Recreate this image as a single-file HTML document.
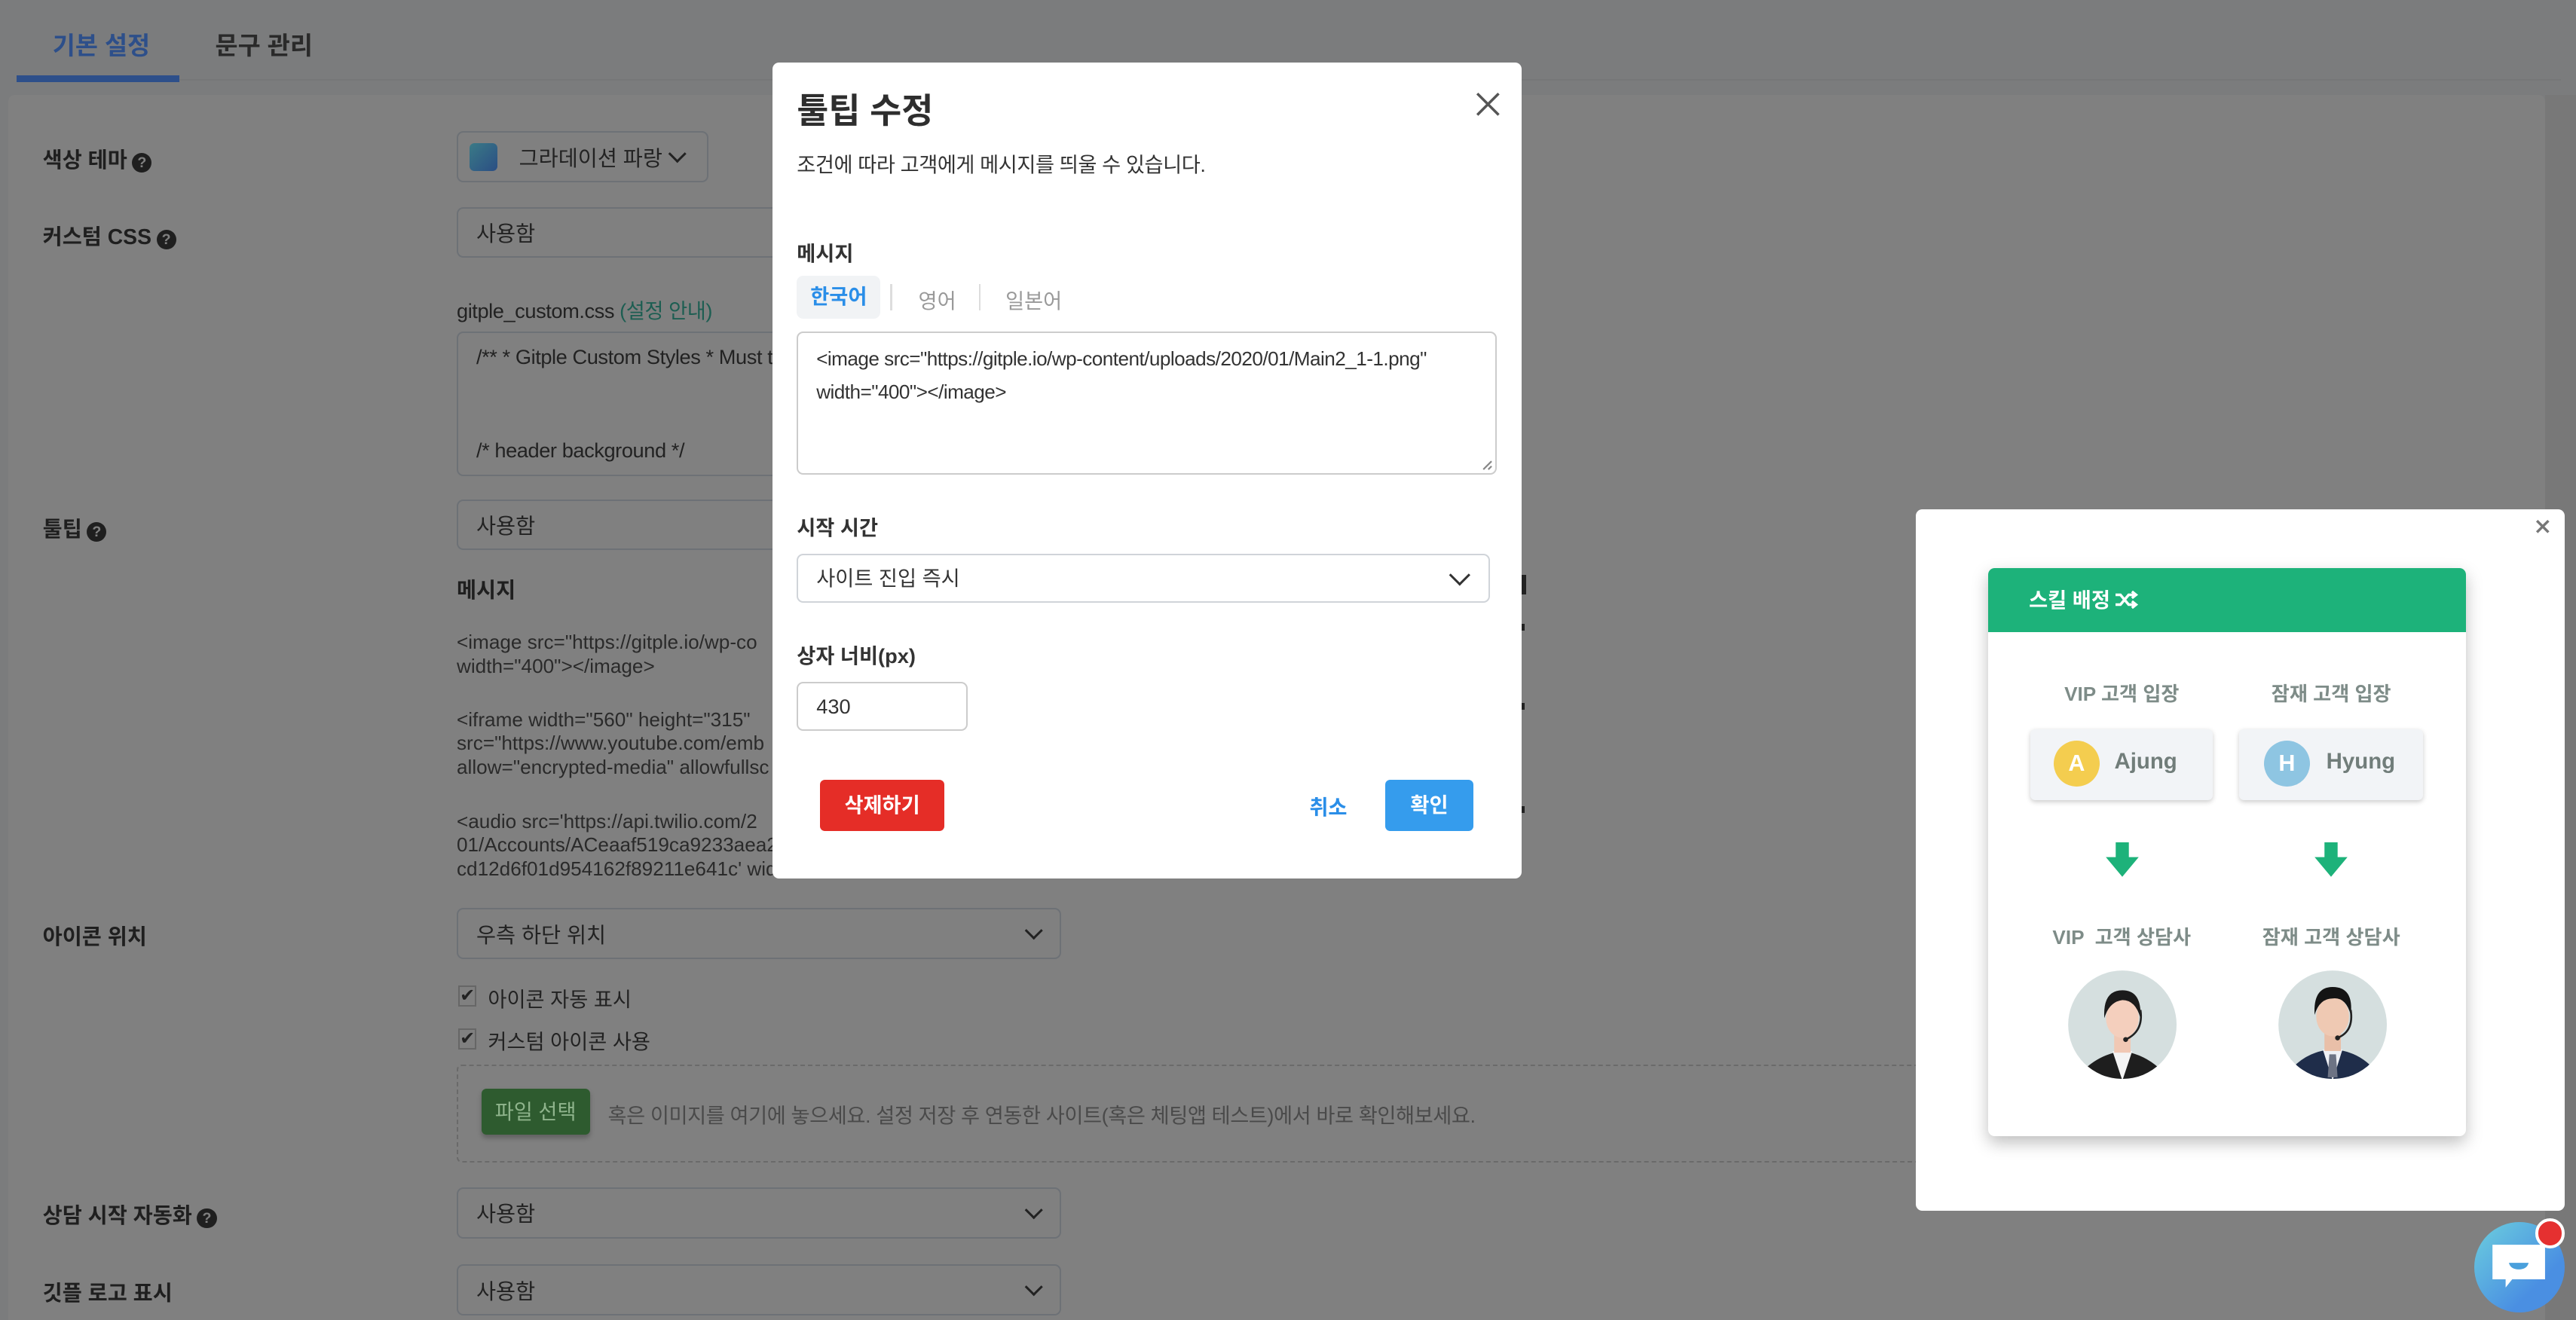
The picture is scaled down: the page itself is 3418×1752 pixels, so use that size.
<!DOCTYPE html>
<html><head><meta charset="utf-8">
<style>
*{box-sizing:border-box;margin:0;padding:0}
html,body{width:3418px;height:1752px;overflow:hidden;background:#7b7c7d}
#r{zoom:2.17985;width:1568px;height:804px;position:relative;overflow:hidden;background:#7b7c7d;font-family:"Liberation Sans","Noto Sans CJK KR",sans-serif;color:#222}
.a{position:absolute;white-space:nowrap}
.lbl{font-size:13px;font-weight:bold;color:#1f1f1f}
.q{display:inline-block;width:12px;height:12px;border-radius:50%;background:#1f1f1f;color:#808080;font-size:9px;line-height:12px;text-align:center;font-weight:bold;vertical-align:0px;margin-left:3px}
.box{position:absolute;border:1px solid #6d7176;border-radius:4px;font-size:13px;color:#222;padding-left:11px;display:flex;align-items:center}
.chev{position:absolute;right:12px;top:50%;width:8px;height:8px;border-right:1.6px solid #222;border-bottom:1.6px solid #222;transform:translateY(-70%) rotate(45deg)}
.msg{font-size:12px;color:#2a2a2a;line-height:14.5px}
.cb{position:absolute;width:11px;height:13px;border:1px solid #666;font-size:11px;line-height:11px;text-align:center;color:#222}
</style></head><body><div id="r">
<div class="a" style="left:32px;top:16px;font-size:15px;font-weight:bold;color:#2d4f8a">기본 설정</div>
<div class="a" style="left:131px;top:16px;font-size:15px;font-weight:bold;color:#2a2a2a">문구 관리</div>
<div class="a" style="left:10px;top:46px;width:99px;height:4px;background:#2d4f8a"></div>
<div class="a" style="left:109px;top:48px;width:1450px;height:1px;background:#767778"></div>
<div class="a" style="left:5px;top:58px;width:1544px;height:760px;background:#808080;border-radius:4px"></div>
<div class="a" style="left:1549px;top:58px;width:19px;height:760px;background:#787878"></div>

<div class="a lbl" style="left:26px;top:87px">색상 테마<span class="q">?</span></div>
<div class="box" style="left:278px;top:80px;width:153px;height:31px;padding-left:7px"><span style="width:17px;height:17px;border-radius:3px;background:linear-gradient(135deg,#3a7a86,#2b4e84);display:inline-block;margin-right:13px"></span>그라데이션 파랑<div class="chev" style="right:14px"></div></div>

<div class="a lbl" style="left:26px;top:134px">커스텀 CSS<span class="q">?</span></div>
<div class="box" style="left:278px;top:126px;width:368px;height:31px">사용함</div>
<div class="a" style="left:278px;top:179px;font-size:12.5px;color:#222;letter-spacing:-0.2px">gitple_custom.css <span style="color:#1d5e52">(설정 안내)</span></div>
<div class="box" style="left:278px;top:202px;width:368px;height:88px;align-items:flex-start;padding-top:5px;font-size:12.5px;line-height:19px;overflow:hidden;display:block;letter-spacing:-0.2px">/** * Gitple Custom Styles * Must t<br><br><br>/* header background */</div>

<div class="a lbl" style="left:26px;top:312px">툴팁<span class="q">?</span></div>
<div class="box" style="left:278px;top:304px;width:368px;height:31px">사용함</div>
<div class="a lbl" style="left:278px;top:349px">메시지</div>
<div class="a msg" style="left:278px;top:384px">&lt;image src="https://gitple.io/wp-co<br>width="400"&gt;&lt;/image&gt;</div>
<div class="a msg" style="left:278px;top:431px">&lt;iframe width="560" height="315"<br>src="https://www.youtube.com/emb<br>allow="encrypted-media" allowfullsc</div>
<div class="a msg" style="left:278px;top:493px">&lt;audio src='https://api.twilio.com/2<br>01/Accounts/ACeaaf519ca9233aea2<br>cd12d6f01d954162f89211e641c' wid</div>
<div class="a" style="left:926px;top:350px;width:3px;height:12px;background:#222"></div>
<div class="a" style="left:926px;top:380px;width:2px;height:4px;background:#222"></div>
<div class="a" style="left:926px;top:428px;width:2px;height:4px;background:#222"></div>
<div class="a" style="left:926px;top:491px;width:2px;height:4px;background:#222"></div>

<div class="a lbl" style="left:26px;top:560px">아이콘 위치</div>
<div class="box" style="left:278px;top:553px;width:368px;height:31px">우측 하단 위치<div class="chev"></div></div>
<div class="cb" style="left:279px;top:600px">✔</div>
<div class="a" style="left:297px;top:598px;font-size:12.5px">아이콘 자동 표시</div>
<div class="cb" style="left:279px;top:626px">✔</div>
<div class="a" style="left:297px;top:624px;font-size:12.5px">커스텀 아이콘 사용</div>
<div class="a" style="left:278px;top:648px;width:900px;height:60px;border:1px dashed #6a6a6a;border-radius:3px"></div>
<div class="a" style="left:293px;top:663px;width:66px;height:28px;background:#2e5b2f;border-radius:3px;color:#8fb48c;font-size:12.5px;text-align:center;line-height:28px;box-shadow:0 2px 3px rgba(0,0,0,.25)">파일 선택</div>
<div class="a" style="left:370px;top:669px;font-size:12.5px;color:#4a4a4a;letter-spacing:-0.2px">혹은 이미지를 여기에 놓으세요. 설정 저장 후 연동한 사이트(혹은 체팅앱 테스트)에서 바로 확인해보세요.</div>

<div class="a lbl" style="left:26px;top:730px">상담 시작 자동화<span class="q">?</span></div>
<div class="box" style="left:278px;top:723px;width:368px;height:31px">사용함<div class="chev"></div></div>
<div class="a lbl" style="left:26px;top:777px">깃플 로고 표시</div>
<div class="box" style="left:278px;top:770px;width:368px;height:31px">사용함<div class="chev"></div></div>

<div class="a" style="left:470px;top:38px;width:456px;height:497px;background:#fff;border-radius:4px"></div>
<div class="a" style="left:485px;top:51px;font-size:21px;font-weight:bold;color:#2e2e2e">툴팁 수정</div>
<svg class="a" style="left:898px;top:56px" width="15" height="15" viewBox="0 0 15 15"><path d="M1 1L14 14M14 1L1 14" stroke="#555" stroke-width="1.6"/></svg>
<div class="a" style="left:485px;top:90px;font-size:12.5px;color:#333;letter-spacing:-0.2px">조건에 따라 고객에게 메시지를 띄울 수 있습니다.</div>
<div class="a" style="left:485px;top:144px;font-size:12.5px;font-weight:bold;color:#333">메시지</div>
<div class="a" style="left:485px;top:168px;width:51px;height:26px;background:#f1f3f5;border-radius:4px;color:#2a8ee8;font-weight:bold;font-size:12.5px;text-align:center;line-height:26px">한국어</div>
<div class="a" style="left:542px;top:173px;width:1px;height:16px;background:#ddd"></div>
<div class="a" style="left:559px;top:173px;font-size:12.5px;color:#999">영어</div>
<div class="a" style="left:596px;top:173px;width:1px;height:16px;background:#ddd"></div>
<div class="a" style="left:612px;top:173px;font-size:12.5px;color:#999">일본어</div>
<div class="a" style="left:485px;top:202px;width:426px;height:87px;border:1px solid #ccc;border-radius:4px;padding:6px 11px;font-size:12px;letter-spacing:-0.25px;line-height:20px;color:#333">&lt;image src="https://gitple.io/wp-content/uploads/2020/01/Main2_1-1.png"<br>width="400"&gt;&lt;/image&gt;</div>
<svg class="a" style="left:902px;top:280px" width="7" height="7"><path d="M1 6L6 1M4 6L6 4" stroke="#888" stroke-width="1"/></svg>
<div class="a" style="left:485px;top:311px;font-size:12.5px;font-weight:bold;color:#333">시작 시간</div>
<div class="a" style="left:485px;top:337px;width:422px;height:30px;border:1px solid #d0d4d9;border-radius:4px;font-size:12.5px;color:#333;padding-left:11px;line-height:28px">사이트 진입 즉시<div class="chev" style="border-color:#333;right:13px;width:9px;height:9px"></div></div>
<div class="a" style="left:485px;top:389px;font-size:12.5px;font-weight:bold;color:#333">상자 너비(px)</div>
<div class="a" style="left:485px;top:415px;width:104px;height:30px;border:1px solid #ccc;border-radius:4px;font-size:12.5px;color:#333;padding-left:11px;line-height:28px">430</div>
<div class="a" style="left:499px;top:475px;width:76px;height:31px;background:#e52d27;border-radius:3px;color:#fff;font-weight:bold;font-size:12.5px;text-align:center;line-height:31px">삭제하기</div>
<div class="a" style="left:797px;top:481px;font-size:12.5px;font-weight:bold;color:#2a8ee8">취소</div>
<div class="a" style="left:843px;top:475px;width:54px;height:31px;background:#359ced;border-radius:3px;color:#fff;font-weight:bold;font-size:12.5px;text-align:center;line-height:31px">확인</div>

<div class="a" style="left:1166px;top:310px;width:395px;height:427px;background:#fff;border-radius:4px"></div>
<svg class="a" style="left:1543px;top:316px" width="9" height="9"><path d="M1 1L8 8M8 1L1 8" stroke="#777" stroke-width="1.6"/></svg>
<div class="a" style="left:1210px;top:346px;width:291px;height:346px;background:#fff;border-radius:4px;box-shadow:0 4px 10px rgba(0,0,0,.25);overflow:hidden">
 <div style="height:39px;background:#1db27a;color:#fff;font-weight:bold;font-size:12.5px;padding-left:25px;line-height:39px">스킬 배정 <svg width="14" height="11" viewBox="0 0 14 11" style="vertical-align:-1px"><path d="M0 2.5h3l5 6h4M0 8.5h3l5-6h4M10 0.5l2.5 2-2.5 2M10 6.5l2.5 2-2.5 2" stroke="#fff" stroke-width="1.6" fill="none"/></svg></div>
</div>
<div class="a" style="left:1236px;top:413px;width:111px;text-align:center;font-size:12px;font-weight:bold;color:#7e8c88">VIP 고객 입장</div>
<div class="a" style="left:1363px;top:413px;width:112px;text-align:center;font-size:12px;font-weight:bold;color:#7e8c88">잠재 고객 입장</div>
<div class="a" style="left:1236px;top:444px;width:111px;height:43px;background:#f2f4f7;border-radius:3px;box-shadow:0 1px 3px rgba(0,0,0,.2)"></div>
<div class="a" style="left:1363px;top:444px;width:112px;height:43px;background:#f2f4f7;border-radius:3px;box-shadow:0 1px 3px rgba(0,0,0,.2)"></div>
<div class="a" style="left:1250px;top:451px;width:28px;height:28px;border-radius:50%;background:#f4cd4f;color:#fff;font-weight:bold;font-size:14px;text-align:center;line-height:28px">A</div>
<div class="a" style="left:1287px;top:456px;font-size:13.5px;font-weight:bold;color:#717d7a">Ajung</div>
<div class="a" style="left:1378px;top:451px;width:28px;height:28px;border-radius:50%;background:#8ec5e2;color:#fff;font-weight:bold;font-size:14px;text-align:center;line-height:28px">H</div>
<div class="a" style="left:1416px;top:456px;font-size:13.5px;font-weight:bold;color:#717d7a">Hyung</div>
<svg class="a" style="left:1281px;top:513px" width="22" height="22"><path d="M7 0h8v9h6l-10 12L1 9h6z" fill="#1db27a"/></svg>
<svg class="a" style="left:1408px;top:513px" width="22" height="22"><path d="M7 0h8v9h6l-10 12L1 9h6z" fill="#1db27a"/></svg>
<div class="a" style="left:1236px;top:561px;width:111px;text-align:center;font-size:12px;font-weight:bold;color:#7e8c88">VIP &nbsp;고객 상담사</div>
<div class="a" style="left:1363px;top:561px;width:112px;text-align:center;font-size:12px;font-weight:bold;color:#7e8c88">잠재 고객 상담사</div>
<svg class="a" style="left:1258px;top:590px" width="68" height="68" viewBox="0 0 68 68"><defs><clipPath id="c1"><circle cx="34" cy="34" r="33"/></clipPath></defs><circle cx="34" cy="34" r="33" fill="#d5dfdf"/><g clip-path="url(#c1)"><path d="M10 62 Q20 52 34 50 Q48 52 58 62 L58 70 L10 70z" fill="#1e1e1e"/><path d="M28 50 L34 68 L40 50z" fill="#f4f4f4"/><rect x="29" y="38" width="10" height="13" fill="#f1c8b4"/><ellipse cx="34" cy="30" rx="10" ry="12" fill="#f4cfbd"/><path d="M23 30 Q22 13 34 13 Q46 13 45 30 Q42 19 34 19 Q26 20 23 30z" fill="#1b1b1b"/><path d="M45 25 Q47 38 36 43" stroke="#222" stroke-width="1.2" fill="none"/><circle cx="36" cy="43" r="1.5" fill="#222"/></g></svg>
<svg class="a" style="left:1386px;top:590px" width="68" height="68" viewBox="0 0 68 68"><defs><clipPath id="c2"><circle cx="34" cy="34" r="33"/></clipPath></defs><circle cx="34" cy="34" r="33" fill="#d5dfdf"/><g clip-path="url(#c2)"><path d="M8 62 Q18 50 34 49 Q50 50 60 62 L60 70 L8 70z" fill="#1f2d4a"/><path d="M28 49 L34 68 L40 49z" fill="#eef0f5"/><path d="M32 52 L36 52 L37 66 L31 66z" fill="#6d7384"/><rect x="29" y="37" width="10" height="13" fill="#e9bfa8"/><ellipse cx="34" cy="29" rx="10" ry="12" fill="#efc9b3"/><path d="M23 28 Q22 11 34 11 Q47 11 45 28 Q42 17 34 18 Q26 18 23 28z" fill="#141414"/><path d="M45 25 Q47 38 37 42" stroke="#222" stroke-width="1.2" fill="none"/><circle cx="37" cy="42" r="1.5" fill="#222"/></g></svg>

<div class="a" style="left:1506px;top:744px;width:55px;height:55px;border-radius:50%;background:linear-gradient(135deg,#6ccfde,#4a8fe2 70%)"></div>
<svg class="a" style="left:1516px;top:757px" width="34" height="32" viewBox="0 0 34 32"><path d="M1 1h32v21H13l-4 5v-5H1z" fill="#fff"/><path d="M11 12h12q-1 4-6 4t-6-4z" fill="#4aa0dc"/></svg>
<div class="a" style="left:1543px;top:742px;width:18px;height:18px;border-radius:50%;background:#e53030;border:2px solid #fff"></div>
</div></body></html>
